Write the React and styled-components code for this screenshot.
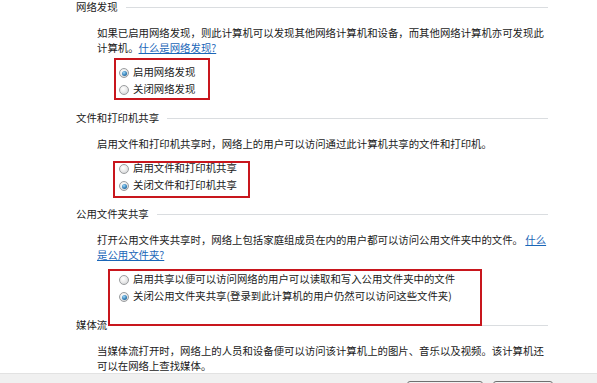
import React from 'react'
import styled, { createGlobalStyle, css } from 'styled-components'

const GlobalStyle = createGlobalStyle`
  html, body {
    margin: 0;
    padding: 0;
    background: #ffffff;
    overflow: hidden;
  }
  body {
    font-family: "Noto Sans CJK SC", "Noto Sans", sans-serif;
    color: #1a1a1a;
  }
`;

const Page = styled.div`
  width: 597px;
  height: 383px;
  overflow: hidden;
  display: flex;
  flex-direction: column;
`;

const Content = styled.div`
  padding-left: 76px;
  width: 472px;
  font-size: 10.4px;
`;

const Heading = styled.div`
  display: flex;
  align-items: center;
  gap: 8px;
  height: 14px;
  line-height: 14px;
  white-space: nowrap;

  &::after {
    content: '';
    flex: 1;
    height: 1px;
    background: #dadde0;
  }
`;

const Paragraph = styled.p`
  margin: 11px 0 0 21px;
  line-height: 15px;
  white-space: nowrap;
`;

const Link = styled.a`
  color: #1a66b8;
  text-decoration: underline;
  cursor: pointer;
`;

const RadioGroup = styled.div`
  position: relative;
  margin: 8px 0 14px 43px;
`;

const RadioRow = styled.label`
  display: flex;
  align-items: center;
  gap: 4px;
  height: 17px;
  white-space: nowrap;
`;

const RadioDot = styled.span`
  position: relative;
  flex: none;
  box-sizing: border-box;
  width: 10px;
  height: 10px;
  margin-top: 3px;
  border-radius: 50%;
  border: 1px solid #9b9d9f;
  background: radial-gradient(circle at 40% 35%, #ffffff 0%, #ececec 45%, #c9cccf 100%);

  ${p => p.$checked && css`
    &::after {
      content: '';
      position: absolute;
      left: 1.5px;
      top: 1.5px;
      width: 5px;
      height: 5px;
      border-radius: 50%;
      background: radial-gradient(circle at 40% 35%, #a6dcf7 0%, #3a86bf 50%, #1b4e78 100%);
    }
  `}
`;

const Highlight = styled.div`
  position: absolute;
  box-sizing: border-box;
  border: 2px solid #c8161d;
  pointer-events: none;
  left: ${p => p.$left}px;
  top: ${p => p.$top}px;
  width: ${p => p.$width}px;
  height: ${p => p.$height}px;
`;

const Footer = styled.div`
  margin-top: auto;
  flex: none;
  height: 10px;
  box-sizing: border-box;
  border-top: 1px solid #e2e2e2;
  background: #f0f0f0;
  display: flex;
  justify-content: flex-end;
  align-items: flex-start;
  gap: 10px;
  padding: 7px 44px 0 0;
  overflow: visible;
`;

const Button = styled.button`
  flex: none;
  width: ${p => p.$width}px;
  height: 23px;
  padding: 0;
  border: 1px solid #707070;
  border-radius: 3px;
  background: linear-gradient(#f2f2f2, #ebebeb 50%, #dddddd 51%, #cfcfcf);
`;

const Radio = ({ checked, children }) => (
  <RadioRow>
    <RadioDot $checked={checked} />
    {children}
  </RadioRow>
);

export default function App() {
  return (
    <Page>
      <GlobalStyle />
      <Content>
        <Heading>网络发现</Heading>
        <Paragraph>
          如果已启用网络发现，则此计算机可以发现其他网络计算机和设备，而其他网络计算机亦可发现此<br />
          计算机。<Link>什么是网络发现?</Link>
        </Paragraph>
        <RadioGroup>
          <Radio checked>启用网络发现</Radio>
          <Radio>关闭网络发现</Radio>
          <Highlight $left={-5} $top={-5} $width={96} $height={42} />
        </RadioGroup>

        <Heading>文件和打印机共享</Heading>
        <Paragraph>启用文件和打印机共享时，网络上的用户可以访问通过此计算机共享的文件和打印机。</Paragraph>
        <RadioGroup>
          <Radio>启用文件和打印机共享</Radio>
          <Radio checked>关闭文件和打印机共享</Radio>
          <Highlight $left={-6} $top={2} $width={137} $height={37} />
        </RadioGroup>

        <Heading>公用文件夹共享</Heading>
        <Paragraph>
          打开公用文件夹共享时，网络上包括家庭组成员在内的用户都可以访问公用文件夹中的文件。 <Link>什么<br />
          是公用文件夹?</Link>
        </Paragraph>
        <RadioGroup>
          <Radio>启用共享以便可以访问网络的用户可以读取和写入公用文件夹中的文件</Radio>
          <Radio checked>关闭公用文件夹共享(登录到此计算机的用户仍然可以访问这些文件夹)</Radio>
          <Highlight $left={-11} $top={-1} $width={374} $height={57} />
        </RadioGroup>

        <Heading>媒体流</Heading>
        <Paragraph>
          当媒体流打开时，网络上的人员和设备便可以访问该计算机上的图片、音乐以及视频。该计算机还<br />
          可以在网络上查找媒体。
        </Paragraph>
      </Content>
      <Footer>
        <Button $width={76} aria-label="保存修改" />
        <Button $width={60} aria-label="取消" />
      </Footer>
    </Page>
  );
}
